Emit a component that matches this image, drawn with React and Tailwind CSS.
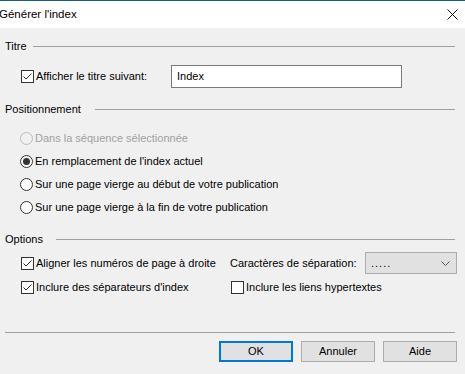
import React from 'react';

function CheckBox({ checked }) {
  return (
    <span className="w-[13px] h-[13px] border border-[#333333] bg-white flex items-center justify-center shrink-0">
      {checked && (
        <svg width="11" height="11" viewBox="0 0 11 11">
          <path d="M1.5 5.5 L4 8 L9.5 2.5" fill="none" stroke="#333333" strokeWidth="1" />
        </svg>
      )}
    </span>
  );
}

function Radio({ checked, disabled }) {
  return (
    <span
      className={`w-[13px] h-[13px] rounded-full border flex items-center justify-center shrink-0 ${
        disabled ? 'border-[#bcbcbc] bg-[#f0f0f0]' : 'border-[#333333] bg-white'
      }`}
    >
      {checked && <span className="w-[7px] h-[7px] rounded-full bg-[#333333]" />}
    </span>
  );
}

function GroupHeader({ label, width }) {
  return (
    <div className="flex items-center h-[18px] pl-[5px] pr-[10px]">
      <span className={width}>{label}</span>
      <div className="flex-1 h-px bg-[#a0a0a0]" />
    </div>
  );
}

function RadioRow({ label, checked, disabled }) {
  return (
    <div className={`flex items-center h-[23px] pl-[20px] gap-[2px] ${disabled ? 'text-[#a0a0a0]' : ''}`}>
      <Radio checked={checked} disabled={disabled} />
      <span>{label}</span>
    </div>
  );
}

export default function App() {
  return (
    <div className="w-[465px] h-[374px] bg-[#f0f0f0] overflow-hidden text-[11px] text-black font-['Liberation_Sans',sans-serif] leading-none whitespace-nowrap">
      {/* barre de titre */}
      <div className="h-[28px] bg-white border-t border-[#1c5a98] flex items-center justify-between pr-[7px] text-[11.5px]">
        <span className="-ml-[1px]">Générer l'index</span>
        <svg width="11" height="11" viewBox="0 0 11 11">
          <path d="M0.5 0.5 L10.5 10.5 M10.5 0.5 L0.5 10.5" stroke="#111" strokeWidth="1" />
        </svg>
      </div>

      <div className="mt-[9px]">
        <GroupHeader label="Titre" width="w-[28px]" />
      </div>
      <div className="flex items-center h-[23px] mt-[10px] pl-[21px]">
        <CheckBox checked />
        <span className="ml-[2px] w-[135px]">Afficher le titre suivant:</span>
        <div className="w-[231px] h-[23px] bg-white border border-[#7a7a7a] flex items-center pl-[5px]">Index</div>
      </div>

      <div className="mt-[12px]">
        <GroupHeader label="Positionnement" width="w-[90px]" />
      </div>
      <div className="mt-[9px]">
        <RadioRow label="Dans la séquence sélectionnée" disabled />
        <RadioRow label="En remplacement de l'index actuel" checked />
        <RadioRow label="Sur une page vierge au début de votre publication" />
        <RadioRow label="Sur une page vierge à la fin de votre publication" />
      </div>

      <div className="mt-[11px]">
        <GroupHeader label="Options" width="w-[51px]" />
      </div>
      <div className="flex items-center h-[22px] mt-[4px] pl-[21px]">
        <div className="flex items-center gap-[2px] w-[209px]">
          <CheckBox checked />
          <span>Aligner les numéros de page à droite</span>
        </div>
        <span className="w-[135px]">Caractères de séparation:</span>
        <div className="w-[92px] h-[22px] bg-[#e1e1e1] border border-[#adadad] flex items-center justify-between pl-[5px] pr-[6px]">
          <span className="tracking-[1px]">.....</span>
          <svg width="9" height="5" viewBox="0 0 9 5">
            <path d="M0.5 0.5 L4.5 4.5 L8.5 0.5" fill="none" stroke="#555" strokeWidth="1" />
          </svg>
        </div>
      </div>
      <div className="flex items-center h-[22px] mt-[2px] pl-[21px]">
        <div className="flex items-center gap-[2px] w-[210px]">
          <CheckBox checked />
          <span>Inclure des séparateurs d'index</span>
        </div>
        <div className="flex items-center gap-[2px]">
          <CheckBox />
          <span>Inclure les liens hypertextes</span>
        </div>
      </div>

      <div className="mt-[34px] ml-[5px] mr-[10px] h-px bg-[#a0a0a0]" />
      <div className="flex justify-end gap-[8px] mt-[8px] pr-[8px]">
        <button className="w-[74px] h-[21px] bg-[#e1e1e1] border-2 border-[#0078d7]">OK</button>
        <button className="w-[74px] h-[21px] bg-[#e1e1e1] border border-[#adadad]">Annuler</button>
        <button className="w-[74px] h-[21px] bg-[#e1e1e1] border border-[#adadad]">Aide</button>
      </div>
    </div>
  );
}
